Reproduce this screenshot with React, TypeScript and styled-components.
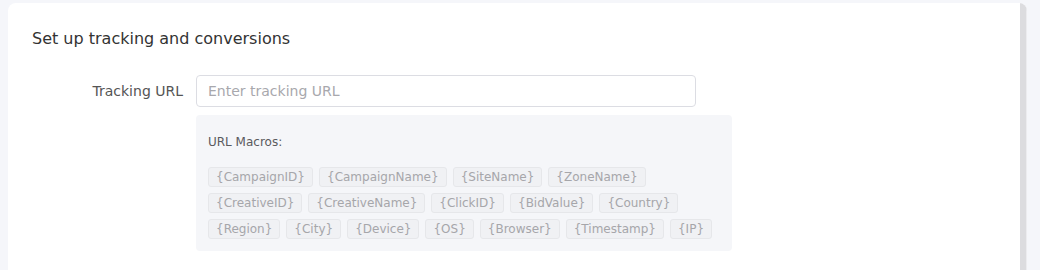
import React from "react";
import styled, { createGlobalStyle } from "styled-components";

const Global = createGlobalStyle`
  html, body { margin: 0; padding: 0; background: #f5f6fa; }
  body { font-family: "DejaVu Sans", "Noto Sans", sans-serif; }
  * { box-sizing: border-box; }
`;

const Page = styled.div`
  display: flex;
  padding: 3px 13px 0 8px;
  height: 270px;
`;

const Card = styled.div`
  flex: 1;
  display: flex;
  background: #ffffff;
  border-radius: 8px 8px 0 0;
  overflow: hidden;
`;

const Content = styled.div`
  flex: 1;
  padding: 24px 24px 0 24px;
`;

const ScrollTrack = styled.div`
  width: 7px;
  background: #dcdcdf;
  border-right: 1px solid #ececef;
`;

const Title = styled.h2`
  margin: 0 0 24px 0;
  font-size: 16px;
  font-weight: 400;
  line-height: 24px;
  color: #333333;
`;

const FormRow = styled.div`
  display: flex;
  align-items: flex-start;
`;

const Label = styled.label`
  width: 164px;
  flex: none;
  padding-right: 13px;
  text-align: right;
  font-size: 14px;
  line-height: 32px;
  color: #555555;
`;

const Field = styled.div`
  display: flex;
  flex-direction: column;
`;

const Input = styled.input`
  width: 500px;
  height: 32px;
  padding: 0 11px;
  border: 1px solid #dcdde3;
  border-radius: 4px;
  font-family: inherit;
  font-size: 14px;
  color: #333;
  outline: none;
  &::placeholder { color: #a8a8ad; }
`;

const MacroBox = styled.div`
  margin-top: 8px;
  width: 536px;
  padding: 17px 12px 12px 12px;
  background: #f5f6f9;
  border-radius: 4px;
`;

const MacroTitle = styled.div`
  font-size: 12px;
  line-height: 20px;
  color: #5a5a5e;
  margin-bottom: 15px;
`;

const Tags = styled.div`
  display: flex;
  flex-wrap: wrap;
  gap: 6px;
`;

const Tag = styled.span`
  display: inline-flex;
  align-items: center;
  height: 20px;
  padding: 0 7px;
  border: 1px solid #e6e7ea;
  border-radius: 3px;
  background: #f0f1f4;
  font-size: 12px;
  color: #a6a6aa;
`;

const macros = [
  "CampaignID", "CampaignName", "SiteName", "ZoneName",
  "CreativeID", "CreativeName", "ClickID", "BidValue", "Country",
  "Region", "City", "Device", "OS", "Browser", "Timestamp", "IP",
];

export default function App() {
  return (
    <>
      <Global />
      <Page>
        <Card>
          <Content>
            <Title>Set up tracking and conversions</Title>
            <FormRow>
              <Label htmlFor="tracking-url">Tracking URL</Label>
              <Field>
                <Input id="tracking-url" placeholder="Enter tracking URL" />
                <MacroBox>
                  <MacroTitle>URL Macros:</MacroTitle>
                  <Tags>
                    {macros.map((m) => (
                      <Tag key={m}>{`{${m}}`}</Tag>
                    ))}
                  </Tags>
                </MacroBox>
              </Field>
            </FormRow>
          </Content>
          <ScrollTrack />
        </Card>
      </Page>
    </>
  );
}
